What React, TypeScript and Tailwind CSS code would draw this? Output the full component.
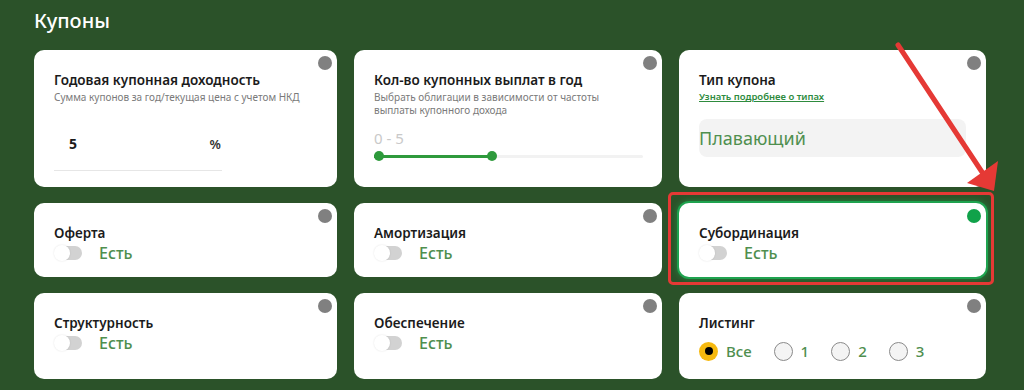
import React from "react";

const Dot = ({ active = false }: { active?: boolean }) => (
  <span
    className={`absolute top-[6px] right-[5px] w-[14px] h-[14px] rounded-full ${
      active ? "bg-[#10a24a]" : "bg-[#808080]"
    }`}
  />
);

const Title = ({ children }: { children: React.ReactNode }) => (
  <div className="text-[13.5px] leading-[16px] font-semibold text-[#1b1b1b]">{children}</div>
);

const Toggle = () => (
  <div className="relative w-[28px] h-[16px]">
    <div className="absolute left-[6px] top-[1px] w-[22px] h-[14px] rounded-full bg-[#d2d2d2]" />
    <div className="absolute left-0 top-0 w-[16px] h-[16px] rounded-full bg-white shadow-[0_0_2px_rgba(0,0,0,0.12)]" />
  </div>
);

const ToggleRow = () => (
  <div className="flex items-center gap-[17px] mt-[2px]">
    <Toggle />
    <span className="text-[16px] leading-[20px] font-medium text-[#4f8f4f]">Есть</span>
  </div>
);

const Card = ({
  children,
  active = false,
  className = "",
}: {
  children: React.ReactNode;
  active?: boolean;
  className?: string;
}) => (
  <div
    className={`relative bg-white rounded-[10px] px-5 pt-[22px] ${
      active ? "ring-2 ring-[#1fa34f] shadow-[0_0_6px_2px_rgba(31,163,79,0.6)]" : ""
    } ${className}`}
  >
    <Dot active={active} />
    {children}
  </div>
);

const Radio = ({ label, checked = false }: { label: string; checked?: boolean }) => (
  <div className="flex items-center gap-[8px]">
    {checked ? (
      <span className="w-[19px] h-[19px] rounded-full bg-[#f6b90f] flex items-center justify-center">
        <span className="w-[8px] h-[8px] rounded-full bg-black" />
      </span>
    ) : (
      <span className="w-[19px] h-[19px] rounded-full bg-[#f4f4f4] border border-[#8a8a8a]" />
    )}
    <span className="text-[15px] font-medium text-[#4f8f4f]">{label}</span>
  </div>
);

export default function App() {
  return (
    <div
      className="relative w-full min-h-[390px] bg-[#2b5229] px-[34px] pt-[8px] overflow-hidden"
      style={{ fontFamily: '"Noto Sans", "Open Sans", sans-serif' }}
    >
      <h1 className="text-white text-[20px] leading-[25px] font-medium">Купоны</h1>
      <div className="mt-[17px] grid grid-cols-[303px_308px_307px] gap-x-[17px] gap-y-[16px] grid-rows-[137px_74px_86px]">
        {/* Row 1 */}
        <Card>
          <Title>Годовая купонная доходность</Title>
          <div className="text-[10px] leading-[13px] text-[#7a7a7a] mt-[3px]">
            Сумма купонов за год/текущая цена с учетом НКД
          </div>
          <div className="mt-[32px] w-[168px] border-b border-[#e6e6e6] flex items-center justify-between pl-[15px] pr-[1px] pb-[18px]">
            <span className="text-[14px] leading-[16px] font-bold text-[#1b1b1b]">5</span>
            <span className="text-[13px] leading-[16px] font-semibold text-[#333]">%</span>
          </div>
        </Card>
        <Card>
          <Title>Кол-во купонных выплат в год</Title>
          <div className="text-[10px] leading-[13px] text-[#7a7a7a] mt-[3px] w-[250px]">
            Выбрать облигации в зависимости от частоты выплаты купонного дохода
          </div>
          <div className="mt-[12px] text-[15px] leading-[18px] text-[#c9c9c9]">0 - 5</div>
          <div className="relative mt-[4px] h-[10px] w-[269px]">
            <div className="absolute left-0 right-0 top-[4px] h-[3px] bg-[#f2f2f2] rounded-full" />
            <div className="absolute left-0 w-[118px] top-[4px] h-[3px] bg-[#2e9a3c]" />
            <div className="absolute left-0 top-0 w-[10px] h-[10px] rounded-full bg-[#2e9a3c]" />
            <div className="absolute left-[113px] top-0 w-[10px] h-[10px] rounded-full bg-[#2e9a3c]" />
          </div>
        </Card>
        <Card>
          <Title>Тип купона</Title>
          <a className="block mt-[2px] text-[9.5px] leading-[13px] font-semibold text-[#2e8b3e] underline">
            Узнать подробнее о типах
          </a>
          <div className="mt-[16px] w-[267px] h-[38px] rounded-[8px] bg-[#f3f3f3] flex items-center">
            <span className="text-[18px] font-normal text-[#4f8f4f]">Плавающий</span>
          </div>
        </Card>

        {/* Row 2 */}
        <Card>
          <Title>Оферта</Title>
          <ToggleRow />
        </Card>
        <Card>
          <Title>Амортизация</Title>
          <ToggleRow />
        </Card>
        <Card active>
          <div className="absolute -left-[11px] -right-[8px] -top-[11px] -bottom-[8px] border-[3px] border-[#e53935] rounded-[5px] pointer-events-none" />
          <Title>Субординация</Title>
          <ToggleRow />
        </Card>

        {/* Row 3 */}
        <Card>
          <Title>Структурность</Title>
          <ToggleRow />
        </Card>
        <Card>
          <Title>Обеспечение</Title>
          <ToggleRow />
        </Card>
        <Card>
          <Title>Листинг</Title>
          <div className="flex items-center mt-[9px] gap-[22px]">
            <Radio label="Все" checked />
            <Radio label="1" />
            <Radio label="2" />
            <Radio label="3" />
          </div>
        </Card>
      </div>

      {/* Annotation arrow */}
      <svg
        className="absolute left-0 top-0 pointer-events-none"
        width="1024"
        height="390"
        viewBox="0 0 1024 390"
      >
        <line x1="898" y1="45" x2="982" y2="172" stroke="#e53935" strokeWidth="5" strokeLinecap="round" />
        <polygon points="994,191 967,183 998,161" fill="#e53935" />
      </svg>
    </div>
  );
}
